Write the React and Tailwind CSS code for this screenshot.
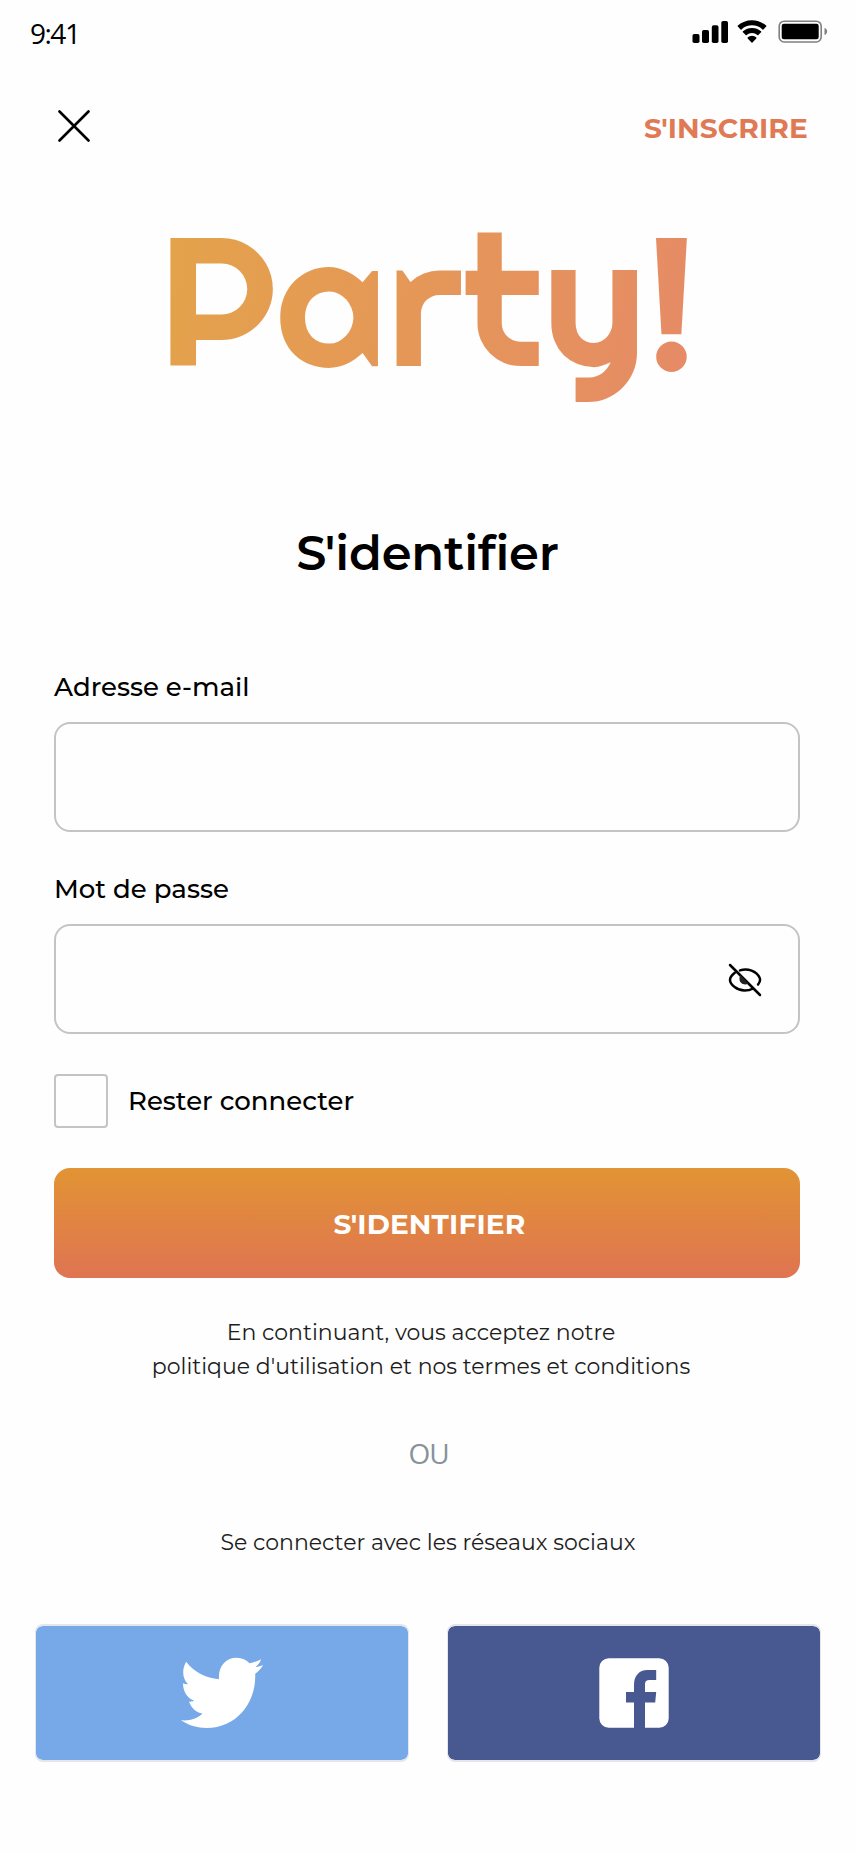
function SignalIcon() {
  return (
    <svg className="h-[24px] w-[36px]" viewBox="0 0 36 24" fill="#000">
      <rect x="0.5" y="14" width="7" height="9" rx="1.8" />
      <rect x="10" y="10" width="7" height="13" rx="1.8" />
      <rect x="19.8" y="5.2" width="6.7" height="17.8" rx="1.8" />
      <rect x="29.3" y="1" width="6.7" height="22" rx="1.8" />
    </svg>
  );
}

function WifiIcon() {
  return (
    <svg className="h-[24px] w-[32px]" viewBox="0 0 32 24" fill="#000">
      <path d="M16 5.300c4 0 7.700 1.500 10.500 4.100.3.300.6.300.9 0l2.800-2.800c.3-.3.3-.7 0-1C26.300 2.200 21.400.2 16 .2S5.700 2.200 1.800 5.600c-.3.3-.3.700 0 1l2.800 2.800c.3.300.6.300.9 0C8.300 6.800 12 5.300 16 5.300z" />
      <path d="M16 13.100c2 0 3.900.8 5.300 2 .3.300.7.200 1 0l2.800-2.800c.3-.3.3-.7 0-1C22.600 9 19.400 7.900 16 7.900s-6.600 1.100-9.100 3.400c-.3.3-.3.700 0 1l2.800 2.800c.3.200.7.300 1 0 1.400-1.200 3.300-2 5.300-2z" />
      <path d="M20.300 17.500c-1.200-1-2.700-1.700-4.300-1.700s-3.100.7-4.300 1.700c-.3.3-.3.700 0 1l3.800 4c.3.300.7.300 1 0l3.800-4c.3-.3.3-.7 0-1z" />
    </svg>
  );
}

function BatteryIcon() {
  return (
    <svg className="h-[24px] w-[51px]" viewBox="0 0 51 24">
      <rect x="1.200" y="1.200" width="42" height="20.800" rx="5" fill="none" stroke="#808080" strokeWidth="1.600" />
      <rect x="3.700" y="3.700" width="37" height="15.600" rx="2.200" fill="#000" />
      <path d="M46.500 8v7c1.700-.6 2.600-1.900 2.600-3.500S48.200 8.600 46.500 8z" fill="#808080" />
    </svg>
  );
}

function CloseIcon() {
  return (
    <svg className="h-[32px] w-[32px]" viewBox="0 0 32 32" fill="none" stroke="#000" strokeWidth="2.600" strokeLinecap="round">
      <path d="M1.500 1.500l29 29M30.500 1.500l-29 29" />
    </svg>
  );
}

function EyeOffIcon() {
  return (
    <svg className="h-[34px] w-[34px]" viewBox="0 0 34 34" fill="none" stroke="#000" strokeWidth="2.500" strokeLinecap="round">
      <path d="M2 2l30 30" />
      <path d="M12 7.400C20 4.600 28.500 8.500 31.500 14.500c1.200 2.400.6 4.500-1.400 7" />
      <path d="M6.800 9.800C4.200 11.800 2 14.800 2 17c0 4.500 7.500 10.500 14.500 10.500 3.200 0 6-.6 8-1.800" />
      <path d="M12.500 12c-1.700 2.800-1.200 6.300.8 8.100 2 1.800 5 1.900 7.200.3z" fill="#222" stroke="none" />
    </svg>
  );
}

function TwitterIcon() {
  return (
    <svg className="h-[72px] w-[84px]" viewBox="0 0 84 72" fill="#fff">
      <path d="M6.200 4.800C14 15 26 21.500 39 22.200C38 9 46 .8 56.500.8C62 .8 66.500 3 69.500 6.300C73.500 5.700 77 4.300 81 2.300C80.200 5.500 78.200 8 75.500 9.900C78.300 9.700 80.800 9.100 83.200 8C81.500 11.200 78.800 14.200 75.200 16.800C76.500 45 57 71 26.500 71C17 71 8.500 68.300 1 63.300C9.500 64 17 62 22.500 56.500C16 55.500 11.500 51.500 9 44.500C10.500 44.900 12.500 44.700 14 43.500C7 41 3 34 3 26.200C4.500 27 6.200 27.400 8 27.200C2.500 22 1.500 12.500 6.200 4.800z" />
    </svg>
  );
}

function FacebookIcon() {
  return (
    <svg className="h-[70px] w-[70px]" viewBox="0 0 70 70">
      <rect x="0.300" y="0.300" width="69.400" height="69.400" rx="9.500" fill="#fff" />
      <path d="M35 70V44.500H27V34H35V27C35 18 40 12 48.500 12H57.200V22H50.500C47.500 22 46 23.300 46 26V34H57.200L56.200 44.500H46V70z" fill="#485992" />
    </svg>
  );
}

function Field({ label, children }) {
  return (
    <label className="block">
      <span className="block text-[26px] font-medium leading-[32px] text-black">{label}</span>
      <span className="mt-[19px] flex h-[110px] items-center justify-end rounded-[16px] border-2 border-[#c4c4c4] pr-[36px] pt-[1px]">
        {children}
      </span>
    </label>
  );
}

export default function App() {
  return (
    <div className="h-[1852px] w-[856px] overflow-hidden bg-[#fefefe] font-['Montserrat','Inter',sans-serif] text-black">
      <header className="flex h-[66px] items-center justify-between pl-[30px] pr-[27px]">
        <span className="font-['Open_Sans','Noto_Sans',sans-serif] text-[28px] leading-[32px] tracking-[-1.5px]">9:41</span>
        <div className="flex items-center pb-[2px]">
          <SignalIcon />
          <span className="ml-[8px] flex"><WifiIcon /></span>
          <span className="ml-[10px] flex"><BatteryIcon /></span>
        </div>
      </header>

      <nav className="mt-[42px] flex h-[40px] items-center justify-between pl-[58px] pr-[48px]">
        <button className="flex pb-[4px]" aria-label="Fermer"><CloseIcon /></button>
        <a className="text-[28px] font-bold leading-[40px] tracking-[0.15px] text-[#e07a54]">S'INSCRIRE</a>
      </nav>

      <div className="mt-[52px] flex h-[200px] justify-center pr-[1px]">
        <div className="h-[240px] bg-[linear-gradient(100deg,#e4a34a_0%,#e68a67_100%)] bg-clip-text font-['Righteous','Montserrat_Alternates','Inter',sans-serif] text-[183px] font-normal leading-[200px] text-transparent">
          Party!
        </div>
      </div>

      <h1 className="mt-[123px] pr-[1px] text-center text-[48px] font-semibold leading-[60px] tracking-[-0.2px]">S'identifier</h1>

      <form className="mt-[88px] w-[800px] pl-[54px]">
        <Field label="Adresse e-mail" />
        <div className="mt-[41px]">
          <Field label="Mot de passe">
            <EyeOffIcon />
          </Field>
        </div>
        <div className="mt-[40px] flex items-center gap-[20px]">
          <span className="size-[54px] rounded-[4px] border-2 border-[#c4c4c4]" />
          <span className="text-[26px] font-medium leading-[32px]">Rester connecter</span>
        </div>
        <button
          type="button"
          className="mt-[40px] flex h-[110px] w-full items-center justify-center rounded-[16px] bg-[linear-gradient(180deg,#e29434,#df7452)] pl-[5px] pt-[2px] text-[28px] font-bold tracking-[0.15px] text-white"
        >
          S'IDENTIFIER
        </button>
      </form>

      <p className="mt-[38px] pr-[14px] text-center text-[22px] leading-[34px] text-[#1c1c1c]">
        En continuant, vous acceptez notre
        <br />
        politique d'utilisation et nos termes et conditions
      </p>

      <p className="mt-[49px] pl-[1px] text-center font-['Open_Sans','Noto_Sans',sans-serif] text-[28px] leading-[40px] tracking-[-1px] text-[#87929a]">OU</p>

      <p className="mt-[55px] text-center text-[22px] leading-[30px] text-[#1c1c1c]">Se connecter avec les réseaux sociaux</p>

      <div className="mt-[66px] flex gap-[38px] pl-[35px]">
        <button className="flex h-[138px] w-[374px] items-center justify-center rounded-[8px] border-x border-y-2 border-[#e3e6ea] bg-[#77a9e9] bg-clip-padding">
          <TwitterIcon />
        </button>
        <button className="flex h-[138px] w-[374px] items-center justify-center rounded-[8px] border-x border-y-2 border-[#e3e6ea] bg-[#485992] bg-clip-padding">
          <FacebookIcon />
        </button>
      </div>
    </div>
  );
}
